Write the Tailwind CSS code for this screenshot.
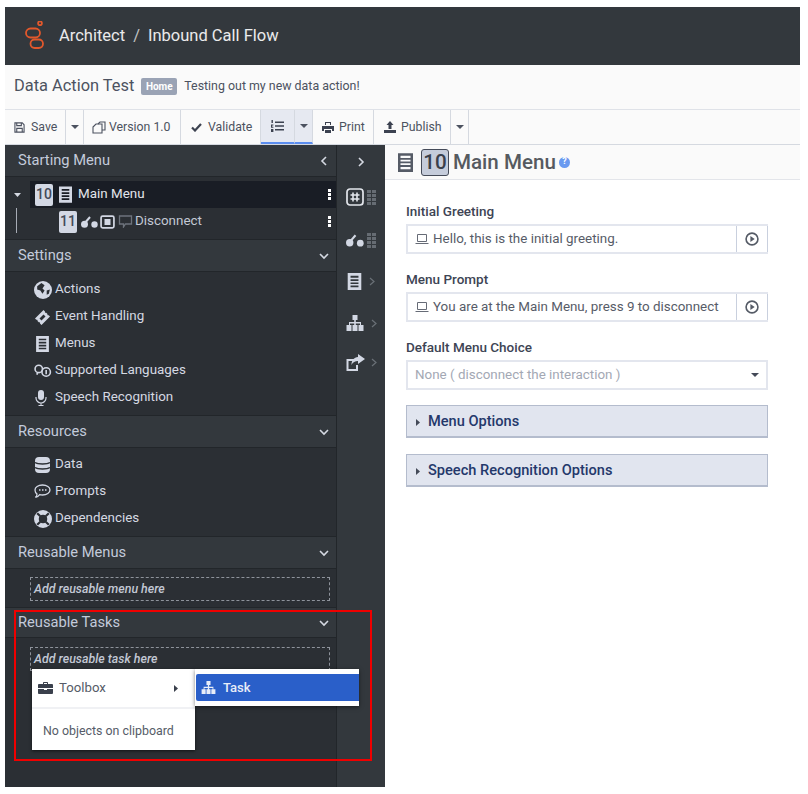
<!DOCTYPE html>
<html lang="en">
<head>
  <meta charset="UTF-8" />
  <title>Architect - Inbound Call Flow</title>
  <script src="https://cdn.jsdelivr.net/npm/@tailwindcss/browser@4"></script>
</head>
<body class="bg-white font-['Roboto',sans-serif] text-[#444a58]">
  <div class="relative w-[808px] h-[794px] overflow-hidden pl-[5px] pr-[8px] pt-[7px] pb-[7px]">
    <div class="flex flex-col h-full">

      <!-- Header -->
      <header class="h-[58px] shrink-0 bg-[#33383d] flex items-center pl-[19px] text-white/90">
        <svg class="w-[22px] h-[30px] mr-[13px]" viewBox="0 0 22 30" fill="none" stroke="#e2582c" stroke-width="1.8">
          <circle cx="16" cy="2.2" r="1.9" />
          <rect x="2" y="7.5" width="14" height="9" rx="4.5" />
          <rect x="6.5" y="18.5" width="12.5" height="8.5" rx="4.2" />
        </svg>
        <span class="text-[16.5px] leading-none">Architect</span>
        <span class="text-[16.5px] leading-none mx-[8px] text-white/70">/</span>
        <span class="text-[16.5px] leading-none">Inbound Call Flow</span>
      </header>

      <!-- Flow title -->
      <div class="h-[45px] shrink-0 bg-[#fafafa] border-b border-[#dfe2e8] flex items-center pl-[9px] pb-[2px]">
        <span class="text-[16.4px] text-[#4c5260]">Data Action Test</span>
        <span class="ml-[7px] bg-[#9aa3b5] rounded-[2px] text-white text-[10px] font-bold w-[36px] justify-center h-[17px] flex items-center">Home</span>
        <span class="ml-[7px] text-[12.4px] text-[#4c5260]">Testing out my new data action!</span>
      </div>

      <!-- Toolbar -->
      <div class="h-[35px] shrink-0 bg-[#fafafa] border-b border-[#d5d9e0] flex items-stretch text-[12.3px] text-[#4c5260]">
        <div class="w-[61px] border-r border-[#d5d9e0] flex items-center pl-[9px] gap-[6px]">
          <svg class="w-[11px] h-[11px]" viewBox="0 0 12 12" fill="none" stroke="currentColor" stroke-width="1.2"><path d="M1 1h8l2 2v8H1z" /><path d="M3 1v3h5V1M3 11V7h6v4" /></svg>
          Save
        </div>
        <div class="w-[18px] border-r border-[#d5d9e0] flex items-center justify-center"><svg class="w-[8px] h-[4px]" viewBox="0 0 8 4" fill="currentColor"><path d="M0 0h8L4 4z" /></svg></div>
        <div class="w-[97px] border-r border-[#d5d9e0] flex items-center pl-[8px] gap-[3px]">
          <svg class="w-[14px] h-[13px]" viewBox="0 0 14 13" fill="none" stroke="currentColor" stroke-width="1.1"><path d="M6 3l2-2h5v8h-3" /><path d="M1 6l3-3h6v9H1z" /></svg>
          Version 1.0
        </div>
        <div class="w-[80px] border-r border-[#d5d9e0] flex items-center pl-[10px] gap-[6px]">
          <svg class="w-[11px] h-[9px]" viewBox="0 0 11 9" fill="none" stroke="#3c4250" stroke-width="2.2"><path d="M1 4.5l3 3 6-6.5" /></svg>
          Validate
        </div>
        <div class="w-[34px] border-r border-[#d5d9e0] border-b-2 border-b-[#5b8def] bg-[#e6e9f1] flex items-center justify-center">
          <svg class="w-[13px] h-[12px]" viewBox="0 0 13 12" fill="#3c4250"><path d="M4 1.5h9v1.4H4zM4 5.3h9v1.4H4zM4 9.1h9v1.4H4z" /><path d="M.5 0h1.4v3H.5zM0 4.6h2.4v1H1.2v1.2h1.2v1H0zM0 9h2.4v3H0z" /></svg>
        </div>
        <div class="w-[18px] border-r border-[#d5d9e0] border-b-2 border-b-[#5b8def] bg-[#e6e9f1] flex items-center justify-center">
          <svg class="w-[8px] h-[4px]" viewBox="0 0 8 4" fill="currentColor"><path d="M0 0h8L4 4z" /></svg>
        </div>
        <div class="w-[61px] border-r border-[#d5d9e0] flex items-center pl-[9px] gap-[5px]">
          <svg class="w-[12px] h-[11px]" viewBox="0 0 12 11" fill="#3c4250"><path d="M3 0h6v3H8V1H4v2H3zM0 4h12v5h-2V7H2v2H0zM3 8h6v3H3z" /></svg>
          Print
        </div>
        <div class="w-[77px] border-r border-[#d5d9e0] flex items-center pl-[10px] gap-[5px]">
          <svg class="w-[12px] h-[12px]" viewBox="0 0 12 12" fill="#3c4250"><path d="M6 0l3.5 4H7.5v4h-3V4H2.5zM0 9h12v3H0z" /></svg>
          Publish
        </div>
        <div class="w-[18px] border-r border-[#d5d9e0] flex items-center justify-center">
          <svg class="w-[8px] h-[4px]" viewBox="0 0 8 4" fill="currentColor"><path d="M0 0h8L4 4z" /></svg>
        </div>
      </div>

      <div class="flex flex-1 min-h-0">

        <!-- Left panel -->
        <aside class="w-[331px] shrink-0 bg-[#2b2f34] text-[#d5d9e2] text-[13.4px]">
          <div class="h-[32px] bg-[#33383d] border-b border-[#22262a] flex items-center justify-between pl-[13px] pr-[7px] text-[14.7px] text-[#c3cbdb]">
            Starting Menu
            <svg class="w-[10px] h-[10px]" viewBox="0 0 10 10" fill="none" stroke="#d5d9e2" stroke-width="1.6"><path d="M7 1L3 5l4 4" /></svg>
          </div>
          <div class="h-[62px] relative pt-[4px]">
            <div class="absolute left-[25px] right-0 top-[4px] h-[27px] bg-[#191d25]"></div>
            <div class="absolute left-[11px] top-[31px] w-px h-[25px] bg-[#a7acb5]"></div>
            <div class="relative h-[27px] flex items-center pl-[9px] text-[#e3e6ec]">
              <svg class="w-[7px] h-[4px] mr-[14px]" viewBox="0 0 7 4" fill="#d5d9e2"><path d="M0 0h7L3.500 4z" /></svg>
              <span class="w-[18px] h-[22px] bg-[#d3d8e4] rounded-[2px] text-[#444a58] text-[14px] font-medium flex items-center justify-center">10</span>
              <svg class="w-[13px] h-[17px] ml-[6px] mr-[6px]" viewBox="0 0 12 15" fill="#d3d8e4"><path d="M0 0h12v15H0zM2.500 2.500v1.600h7V2.500zM2.500 5.500v1.500h7v-1.500zM2.500 8.300v1.500h7v-1.500zM2.500 11v1.500h7V11z" fill-rule="evenodd" /></svg>
              Main Menu
              <span class="ml-auto mr-[5px] flex flex-col gap-px"><i class="block w-[3px] h-[3px] bg-white"></i><i class="block w-[3px] h-[3px] bg-white"></i><i class="block w-[3px] h-[3px] bg-white"></i></span>
            </div>
            <div class="relative h-[27px] flex items-center pl-[54px] text-[#c3c9d5]">
              <span class="w-[18px] h-[22px] bg-[#d3d8e4] rounded-[2px] text-[#444a58] text-[14px] font-medium flex items-center justify-center">11</span>
              <svg class="w-[17px] h-[12px] ml-[4px]" viewBox="0 0 17 12" fill="#d3d8e4"><circle cx="3.500" cy="8.200" r="3.500" /><circle cx="13.500" cy="8.500" r="3.200" /><path d="M3 8L9 1" stroke="#d3d8e4" stroke-width="2" /></svg>
              <svg class="w-[15px] h-[14px] ml-[2px]" viewBox="0 0 14 13" fill="none" stroke="#d3d8e4" stroke-width="1.600"><rect x="1" y="1" width="12" height="11" rx="1.500" /><rect x="5" y="4.500" width="4" height="4" fill="#d3d8e4" /></svg>
              <svg class="w-[15px] h-[13px] ml-[3px] mr-[2px]" viewBox="0 0 14 13" fill="none" stroke="#6d737c" stroke-width="1.300"><path d="M1 1h12v8H7l-2 3V9H1z" /></svg>
              Disconnect
              <span class="ml-auto mr-[5px] flex flex-col gap-px"><i class="block w-[3px] h-[3px] bg-white"></i><i class="block w-[3px] h-[3px] bg-white"></i><i class="block w-[3px] h-[3px] bg-white"></i></span>
            </div>
          </div>

          <div class="h-[33px] bg-[#33383d] border-y border-[#22262a] flex items-center justify-between pl-[13px] pr-[7px] text-[14.7px] text-[#c3cbdb]">
            Settings
            <svg class="w-[10px] h-[10px]" viewBox="0 0 10 10" fill="none" stroke="#d5d9e2" stroke-width="1.600"><path d="M1 3l4 4 4-4" /></svg>
          </div>
          <ul class="h-[143px] pt-[4px]">
            <li class="h-[27px] flex items-center pl-[29px]">
              <svg class="w-[18px] h-[18px] mr-[3px]" viewBox="0 0 17 17"><circle cx="8.500" cy="8.500" r="8.500" fill="#d3d8e4" /><path d="M3 5l4-3 3 2-2 3 2 2-2 3-2-3-3-1zM12 9l3-1-1 4-2 1z" fill="#2b2f34" /></svg>
              Actions
            </li>
            <li class="h-[27px] flex items-center pl-[29px]">
              <svg class="w-[17px] h-[16px] mr-[4px]" viewBox="0 0 17 16"><path d="M1 9.500L9.500 1l1.500 1.500c-.4.800.4 1.600 1.200 1.200l1.300 1.300c-.4.800.4 1.600 1.200 1.200L16 7.500 7.500 16 6 14.500c.4-.8-.4-1.600-1.200-1.200l-1.300-1.300c.4-.8-.4-1.600-1.200-1.200z" fill="#d3d8e4" /><path d="M5.500 9.500l4-4 2 2-4 4z" fill="#2b2f34" /></svg>
              Event Handling
            </li>
            <li class="h-[27px] flex items-center pl-[30px]">
              <svg class="w-[15px] h-[16px] mr-[5px]" viewBox="0 0 12 15" fill="#d3d8e4"><path d="M0 0h12v15H0zM2.500 2.500v1.600h7V2.500zM2.500 5.500v1.500h7v-1.500zM2.500 8.300v1.500h7v-1.500zM2.500 11v1.500h7V11z" fill-rule="evenodd" /></svg>
              Menus
            </li>
            <li class="h-[27px] flex items-center pl-[29px]">
              <svg class="w-[18px] h-[14px] mr-[3px]" viewBox="0 0 17 13" fill="none" stroke="#d3d8e4" stroke-width="1.500"><circle cx="4.500" cy="4.500" r="3.500" /><circle cx="11.500" cy="7.500" r="4" /><path d="M3 8v2M11.500 5.500v4" /></svg>
              Supported Languages
            </li>
            <li class="h-[27px] flex items-center pl-[29px]">
              <svg class="w-[15px] h-[16px] mr-[6px]" viewBox="0 0 15 16" fill="#d3d8e4"><rect x="4" y="0" width="6" height="10" rx="3" /><path d="M2 7v1a5 5 0 0010 0V7" fill="none" stroke="#d3d8e4" stroke-width="1.200" /><path d="M6.500 13h1v2h2v1h-5v-1h2z" /></svg>
              Speech Recognition
            </li>
          </ul>

          <div class="h-[33px] bg-[#33383d] border-y border-[#22262a] flex items-center justify-between pl-[13px] pr-[7px] text-[14.7px] text-[#c3cbdb]">
            Resources
            <svg class="w-[10px] h-[10px]" viewBox="0 0 10 10" fill="none" stroke="#d5d9e2" stroke-width="1.600"><path d="M1 3l4 4 4-4" /></svg>
          </div>
          <ul class="h-[88px] pt-[3px]">
            <li class="h-[27px] flex items-center pl-[29px]">
              <svg class="w-[17px] h-[16px] mr-[4px]" viewBox="0 0 17 16"><rect x="1" y="0" width="15" height="16" rx="4" fill="#d3d8e4" /><path d="M1 5.500c3 2 12 2 15 0M1 10.500c3 2 12 2 15 0" fill="none" stroke="#2b2f34" stroke-width="1.300" /></svg>
              Data
            </li>
            <li class="h-[27px] flex items-center pl-[29px]">
              <svg class="w-[17px] h-[15px] mr-[4px]" viewBox="0 0 17 15" fill="none" stroke="#d3d8e4" stroke-width="1.300"><path d="M8.500 1c4.400 0 7.500 2.300 7.500 5s-3.100 5-7.500 5c-1 0-2-.1-2.800-.4C4.500 12 3 13 1.500 13.500 2.500 12.500 3 11 3 10 1.700 9 1 7.600 1 6c0-2.700 3.100-5 7.500-5z" /><path d="M5 6h1.500M8 6h1.500M11 6h1.500" stroke-width="1.600" /></svg>
              Prompts
            </li>
            <li class="h-[27px] flex items-center pl-[29px]">
              <svg class="w-[18px] h-[18px] mr-[3px]" viewBox="0 0 17 17"><circle cx="8.500" cy="8.500" r="8.500" fill="#d3d8e4" /><circle cx="8.500" cy="8.500" r="4" fill="#2b2f34" /><path d="M3 3l3 3M14 3l-3 3M3 14l3-3M14 14l-3-3" stroke="#2b2f34" stroke-width="2" /></svg>
              Dependencies
            </li>
          </ul>

          <div class="h-[33px] bg-[#33383d] border-y border-[#22262a] flex items-center justify-between pl-[13px] pr-[7px] text-[14.7px] text-[#c3cbdb]">
            Reusable Menus
            <svg class="w-[10px] h-[10px]" viewBox="0 0 10 10" fill="none" stroke="#d5d9e2" stroke-width="1.600"><path d="M1 3l4 4 4-4" /></svg>
          </div>
          <div class="h-[38px] pt-[8px] pl-[25px] pr-[6px]">
            <div class="h-[24px] border border-dashed border-[#8e939b] flex items-center pl-[3px] italic font-medium text-[12.4px] text-[#c3c9d5]">Add reusable menu here</div>
          </div>

          <div class="h-[31px] bg-[#33383d] border-y border-[#22262a] flex items-center justify-between pl-[13px] pr-[7px] text-[14.7px] text-[#c3cbdb]">
            Reusable Tasks
            <svg class="w-[10px] h-[10px]" viewBox="0 0 10 10" fill="none" stroke="#d5d9e2" stroke-width="1.600"><path d="M1 3l4 4 4-4" /></svg>
          </div>
          <div class="pt-[9px] pl-[25px] pr-[6px]">
            <div class="h-[24px] border border-dashed border-[#8e939b] flex items-center pl-[3px] italic font-medium text-[12.4px] text-[#c3c9d5]">Add reusable task here</div>
          </div>
        </aside>

        <!-- Icon strip -->
        <nav class="w-[49px] shrink-0 bg-[#33383d] border-l border-[#22262a] flex flex-col items-center">
          <div class="h-[34px] flex items-center justify-center">
            <svg class="w-[10px] h-[10px]" viewBox="0 0 10 10" fill="none" stroke="#d5d9e2" stroke-width="1.600"><path d="M3 1l4 4-4 4" /></svg>
          </div>
          <div class="h-[36px] flex items-center gap-[3px]">
            <svg class="w-[18px] h-[18px]" viewBox="0 0 18 18"><rect x="1" y="1" width="16" height="16" rx="3" fill="none" stroke="#e3e6ec" stroke-width="1.700" /><path d="M7 4.500v9M11 4.500v9M4.500 7h9M4.500 11h9" stroke="#e3e6ec" stroke-width="1.600" /></svg>
            <span class="flex gap-px">
              <i class="block w-[4px] h-[15px] bg-[repeating-linear-gradient(#666c73_0_3px,#33383d_3px_4px)]"></i>
              <i class="block w-[4px] h-[15px] bg-[repeating-linear-gradient(#666c73_0_3px,#33383d_3px_4px)]"></i>
            </span>
          </div>
          <div class="h-[50px] flex items-center gap-[3px]">
            <svg class="w-[18px] h-[13px]" viewBox="0 0 17 12" fill="#d3d8e4"><circle cx="3.500" cy="8.200" r="3.500" /><circle cx="13.500" cy="8.500" r="3.200" /><path d="M3 8L9 1" stroke="#d3d8e4" stroke-width="2" /></svg>
            <span class="flex gap-px">
              <i class="block w-[4px] h-[15px] bg-[repeating-linear-gradient(#666c73_0_3px,#33383d_3px_4px)]"></i>
              <i class="block w-[4px] h-[15px] bg-[repeating-linear-gradient(#666c73_0_3px,#33383d_3px_4px)]"></i>
            </span>
          </div>
          <div class="h-[32px] flex items-center gap-[7px]">
            <svg class="w-[15px] h-[17px]" viewBox="0 0 12 15" fill="#d3d8e4"><path d="M0 0h12v15H0zM2.500 2.500v1.600h7V2.500zM2.500 5.500v1.500h7v-1.500zM2.500 8.300v1.500h7v-1.500zM2.500 11v1.500h7V11z" fill-rule="evenodd" /></svg>
            <svg class="w-[6px] h-[9px]" viewBox="0 0 6 9" fill="none" stroke="#6a7077" stroke-width="1.200"><path d="M1 1l4 3.500L1 8" /></svg>
          </div>
          <div class="h-[52px] flex items-center gap-[7px]">
            <svg class="w-[18px] h-[16px]" viewBox="0 0 18 16" fill="#d3d8e4"><path d="M6.500 0h5v5h-1.700v2H15v3h2.500v6h-5v-6H14V8.500H9.800V10h1.700v6h-5v-6h1.700V8.500H4V10h1.500v6h-5v-6H3V7h5.200V5H6.500z" /></svg>
            <svg class="w-[6px] h-[9px]" viewBox="0 0 6 9" fill="none" stroke="#6a7077" stroke-width="1.200"><path d="M1 1l4 3.500L1 8" /></svg>
          </div>
          <div class="h-[26px] flex items-center gap-[6px]">
            <svg class="w-[19px] h-[17px]" viewBox="0 0 19 17"><path d="M9 6H1.500v10H11v-5" fill="none" stroke="#d3d8e4" stroke-width="2" /><path d="M12 0l7 5-7 5V7C9 7 7 8 5.500 11 5.500 6 8 3.500 12 3z" fill="#d3d8e4" /></svg>
            <svg class="w-[6px] h-[9px]" viewBox="0 0 6 9" fill="none" stroke="#6a7077" stroke-width="1.200"><path d="M1 1l4 3.500L1 8" /></svg>
          </div>
        </nav>

        <!-- Main content -->
        <main class="flex-1 min-w-0 bg-white">
          <div class="h-[35px] bg-[#fafafa] border-b border-[#e3e5ea] flex items-center pl-[13px]">
            <svg class="w-[15px] h-[19px]" viewBox="0 0 12 15" fill="#555b66"><path d="M0 0h12v15H0zM2 2v1.800h8V2zM2 5.200v1.500h8V5.200zM2 8v1.500h8V8zM2 11v1.800h8V11z" fill-rule="evenodd" /></svg>
            <span class="ml-[8px] w-[28px] h-[27px] bg-[#c5ccdb] border border-[#444a58] rounded-[3px] text-[20.6px] font-medium text-[#3a404c] flex items-center justify-center">10</span>
            <span class="ml-[4px] text-[20.6px] font-medium text-[#565a60]">Main Menu</span>
            <span class="ml-[3px] w-[11px] h-[11px] rounded-full bg-[#6a9af0] text-white text-[9px] font-bold flex items-center justify-center">?</span>
          </div>

          <div class="pl-[21px] w-[383px]">
            <label class="block mt-[22px] text-[13.5px] font-medium text-[#3d4454] leading-[18px]">Initial Greeting</label>
            <div class="mt-[4px] h-[30px] border-2 border-[#e3e6ee] border-r-0 flex">
              <div class="flex-1 flex items-center pl-[7px] text-[13.4px] text-[#575c68]">
                <svg class="w-[14px] h-[10px] mr-[4px]" viewBox="0 0 14 10" fill="none" stroke="#666b76"><path d="M2.500 .5h9v7h-9zM.5 9.500h13" /></svg>
                Hello, this is the initial greeting.
              </div>
              <div class="w-[32px] border-x border-[#c9d0de] flex items-center justify-center">
                <svg class="w-[14px] h-[14px]" viewBox="0 0 13 13"><circle cx="6.500" cy="6.500" r="5.500" fill="none" stroke="#555b66" stroke-width="1.500" /><path d="M5 3.700l4 2.800-4 2.800z" fill="#555b66" /></svg>
              </div>
            </div>

            <label class="block mt-[16px] text-[13.5px] font-medium text-[#3d4454] leading-[18px]">Menu Prompt</label>
            <div class="mt-[4px] h-[30px] border-2 border-[#e3e6ee] border-r-0 flex">
              <div class="flex-1 flex items-center pl-[7px] text-[13.4px] text-[#575c68]">
                <svg class="w-[14px] h-[10px] mr-[4px]" viewBox="0 0 14 10" fill="none" stroke="#666b76"><path d="M2.500 .5h9v7h-9zM.5 9.500h13" /></svg>
                You are at the Main Menu, press 9 to disconnect
              </div>
              <div class="w-[32px] border-x border-[#c9d0de] flex items-center justify-center">
                <svg class="w-[14px] h-[14px]" viewBox="0 0 13 13"><circle cx="6.500" cy="6.500" r="5.500" fill="none" stroke="#555b66" stroke-width="1.500" /><path d="M5 3.700l4 2.800-4 2.800z" fill="#555b66" /></svg>
              </div>
            </div>

            <label class="block mt-[16px] text-[13.5px] font-medium text-[#3d4454] leading-[18px]">Default Menu Choice</label>
            <div class="mt-[4px] h-[30px] border-2 border-[#e3e6ee] flex items-center justify-between pl-[7px] pr-[7px] text-[13.4px] text-[#a3a8b4]">
              None ( disconnect the interaction )
              <svg class="w-[8px] h-[4px]" viewBox="0 0 8 4" fill="#444a58"><path d="M0 0h8L4 4z" /></svg>
            </div>

            <div class="mt-[15px] h-[33px] bg-[#e1e5ef] border border-[#b4bccd] border-b-2 flex items-center pl-[9px] pt-[2px] text-[14.6px] font-medium text-[#24386b]">
              <svg class="w-[4px] h-[7px] mr-[8px]" viewBox="0 0 4 7" fill="#444a58"><path d="M0 0l4 3.500L0 7z" /></svg>
              Menu Options
            </div>
            <div class="mt-[16px] h-[33px] bg-[#e1e5ef] border border-[#b4bccd] border-b-2 flex items-center pl-[9px] pt-[2px] text-[14.6px] font-medium text-[#24386b]">
              <svg class="w-[4px] h-[7px] mr-[8px]" viewBox="0 0 4 7" fill="#444a58"><path d="M0 0l4 3.500L0 7z" /></svg>
              Speech Recognition Options
            </div>
          </div>
        </main>
      </div>
    </div>

    <!-- Context menu -->
    <div class="absolute left-[32px] top-[669px] w-[163px] h-[81px] bg-white shadow-[0_1px_3px_rgba(0,0,0,0.6)] text-[#565c68]">
      <div class="h-[40px] flex items-center pl-[6px] pr-[17px] border-b-2 border-[#f0f1f4] text-[13.2px]">
        <svg class="w-[15px] h-[12px] mr-[6px]" viewBox="0 0 15 12" fill="#3a404c"><path d="M5 2V.8C5 .4 5.300 0 5.800 0h3.400c.5 0 .8.400.8.800V2h4c.5 0 1 .5 1 1v3H0V3c0-.5.5-1 1-1zM6 2h3V1H6zM0 7h6v1h3V7h6v4c0 .5-.5 1-1 1H1c-.5 0-1-.5-1-1z" /></svg>
        Toolbox
        <svg class="w-[4px] h-[7px] ml-auto" viewBox="0 0 4 7" fill="#3a404c"><path d="M0 0l4 3.500L0 7z" /></svg>
      </div>
      <div class="h-[41px] flex items-center pl-[11px] pt-[4px] text-[12.4px]">No objects on clipboard</div>
    </div>
    <div class="absolute left-[195px] top-[669px] w-[164px] h-[37px] bg-white shadow-[0_1px_4px_rgba(0,0,0,0.5)] pt-[5px] pl-px">
      <div class="h-[27px] bg-[#2a5fc9] rounded-l-[2px] flex items-center pl-[5px] text-[13px] font-medium text-[#e8edf8]">
        <svg class="w-[15px] h-[13px] mr-[7px]" viewBox="0 0 18 16" fill="#e8edf8"><path d="M6.500 0h5v5h-1.700v2H15v3h2.500v6h-5v-6H14V8.500H9.800V10h1.700v6h-5v-6h1.700V8.500H4V10h1.500v6h-5v-6H3V7h5.200V5H6.500z" /></svg>
        Task
      </div>
    </div>

    <!-- Red annotation -->
    <div class="absolute left-[14px] top-[610px] w-[358px] h-[151px] border-2 border-[#f00000] pointer-events-none"></div>
  </div>
</body>
</html>
